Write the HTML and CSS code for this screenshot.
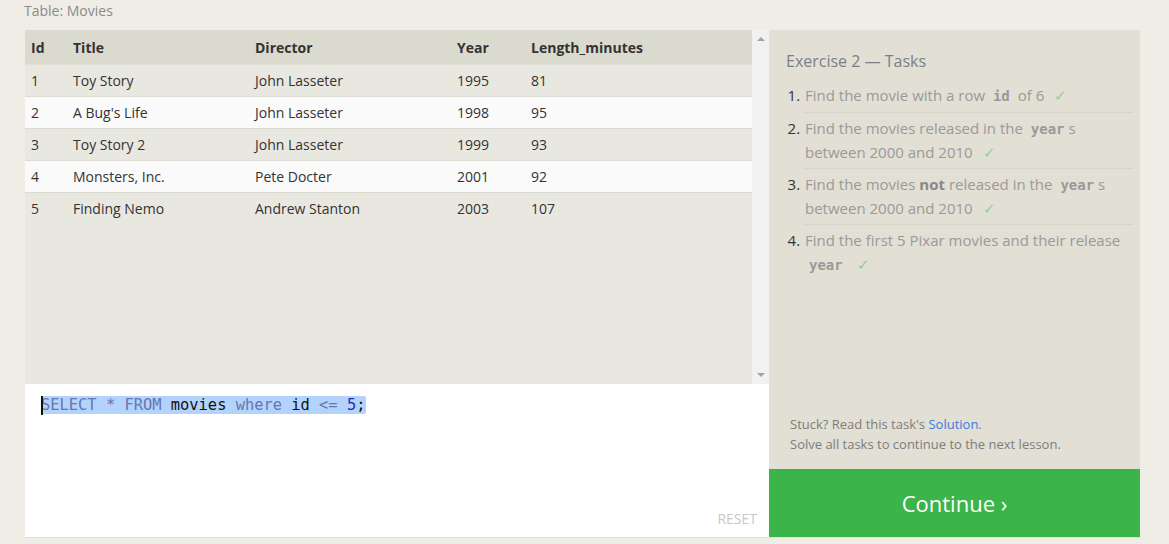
FILE: index.html
```html
<!DOCTYPE html>
<html>
<head>
<meta charset="utf-8">
<link rel="stylesheet" href="styles.css">
</head>
<body>
<div class="label">Table: Movies</div>
<div class="main">
  <div class="left">
    <div class="tablebox">
      <div class="table">
        <div class="row head"><div>Id</div><div>Title</div><div>Director</div><div>Year</div><div>Length_minutes</div></div>
        <div class="row odd"><div>1</div><div>Toy Story</div><div>John Lasseter</div><div>1995</div><div>81</div></div>
        <div class="row even"><div>2</div><div>A Bug's Life</div><div>John Lasseter</div><div>1998</div><div>95</div></div>
        <div class="row odd"><div>3</div><div>Toy Story 2</div><div>John Lasseter</div><div>1999</div><div>93</div></div>
        <div class="row even"><div>4</div><div>Monsters, Inc.</div><div>Pete Docter</div><div>2001</div><div>92</div></div>
        <div class="row odd last"><div>5</div><div>Finding Nemo</div><div>Andrew Stanton</div><div>2003</div><div>107</div></div>
      </div>
      <div class="scrollbar">
        <div class="arrow up"></div>
        <div class="arrow down"></div>
      </div>
    </div>
    <div class="editor">
      <div class="code"><span class="sel"><span class="cursor"></span><span class="kw">SELECT</span> <span class="kw">*</span> <span class="kw">FROM</span> movies <span class="kw">where</span> id <span class="kw">&lt;=</span> <span class="num">5</span>;</span></div>
      <div class="reset">RESET</div>
    </div>
  </div>
  <div class="right">
    <div class="tasks">
      <div class="title">Exercise 2 — Tasks</div>
      <ol class="list">
        <li>Find the movie with a row <code>id</code> of 6 <span class="check">✓</span></li>
        <li>Find the movies released in the <code>year</code>s between 2000 and 2010 <span class="check">✓</span></li>
        <li>Find the movies <b>not</b> released in the <code>year</code>s between 2000 and 2010 <span class="check">✓</span></li>
        <li>Find the first 5 Pixar movies and their release <code>year</code> <span class="check">✓</span></li>
      </ol>
    </div>
    <div class="help">
      <div>Stuck? Read this task's <a class="link">Solution</a>.</div>
      <div>Solve all tasks to continue to the next lesson.</div>
    </div>
    <div class="continue">Continue ›</div>
  </div>
</div>
</body>
</html>
```
FILE: styles.css
```css
html, body {
  margin: 0;
  padding: 0;
}
body {
  background: #efede6;
  font-family: "Open Sans", "Segoe UI", sans-serif;
  color: #333;
  width: 1169px;
  height: 544px;
  overflow: hidden;
}
.label {
  padding: 1px 0 0 24px;
  height: 30px;
  box-sizing: border-box;
  font-size: 14px;
  line-height: 20px;
  color: #8a8a8a;
}
.main {
  display: flex;
  margin-left: 25px;
  width: 1115px;
  height: 507px;
  border-bottom: 1px solid #e1dfd7;
}
.left {
  width: 744px;
  display: flex;
  flex-direction: column;
}
.tablebox {
  height: 354px;
  display: flex;
  background: #e9e8e0;
}
.table {
  flex: 1;
  font-size: 14px;
}
.row {
  display: grid;
  grid-template-columns: 42px 182px 202px 74px 1fr;
  height: 32px;
  line-height: 31px;
  border-bottom: 1px solid #dcdbd3;
  box-sizing: border-box;
}
.row > div {
  padding-left: 6px;
  white-space: nowrap;
}
.row.head {
  height: 35px;
  line-height: 35px;
  background: #dbdacf;
  font-weight: bold;
  border-bottom: 1px solid #e2e1d9;
}
.row.odd { background: #e9e8e0; }
.row.even { background: #fafafa; }
.row.last { border-bottom: none; }
.scrollbar {
  width: 17px;
  background: #f1f1f1;
  display: flex;
  flex-direction: column;
  justify-content: space-between;
  align-items: center;
  padding: 7px 0 7px;
  box-sizing: border-box;
}
.arrow {
  width: 0;
  height: 0;
  border-left: 4px solid transparent;
  border-right: 4px solid transparent;
}
.arrow.up { border-bottom: 4px solid #a3a3a3; }
.arrow.down { border-top: 4px solid #a3a3a3; }
.editor {
  flex: 1;
  background: #fff;
  display: flex;
  flex-direction: column;
  justify-content: space-between;
  padding: 12px 12px 9px 16px;
}
.code {
  font-family: "DejaVu Sans Mono", "Liberation Mono", monospace;
  font-size: 15.4px;
  line-height: 19px;
  color: #111;
}
.sel {
  background: #b3d3fd;
  position: relative;
  padding: 0 1px 0 0;
  border-radius: 2px;
}
.cursor {
  position: absolute;
  left: 0;
  top: 0;
  width: 2px;
  height: 19px;
  background: #111;
}
.kw { color: #6576b0; }
.num { color: #2a2ab0; }
.reset {
  align-self: flex-end;
  font-size: 14px;
  color: #c8c8c8;
  line-height: 18px;
}
.right {
  width: 371px;
  background: #e2dfd4;
  display: flex;
  flex-direction: column;
}
.tasks {
  flex: 1;
  padding: 20px 7px 0 17px;
}
.title {
  font-size: 16px;
  line-height: 22px;
  color: #7b7f88;
}
.list {
  margin: 8px 0 0;
  padding: 0 0 0 18px;
  font-size: 15px;
  line-height: 24px;
  color: #9a9a9a;
}
.list li {
  padding: 3px 0 4px 1px;
  border-bottom: 1px solid #d6d3c8;
}
.list li:first-child { padding-bottom: 5px; }
.list li:last-child { border-bottom: none; }
.list li::marker { color: #333; }
.list code {
  font-family: "DejaVu Sans Mono", "Liberation Mono", monospace;
  font-weight: bold;
  font-size: 14px;
  line-height: 1;
  color: #999;
  padding: 0 4px;
}
.list b { color: #888; }
.check {
  color: #8ecf95;
  margin-left: 6px;
}
.help {
  padding: 0 0 15px 21px;
  font-size: 13px;
  line-height: 20px;
  color: #7d7d7d;
}
.link { color: #3a7be0; }
.continue {
  height: 68px;
  background: #3bb44a;
  color: #fff;
  font-size: 22px;
  display: flex;
  align-items: center;
  justify-content: center;
}
```
